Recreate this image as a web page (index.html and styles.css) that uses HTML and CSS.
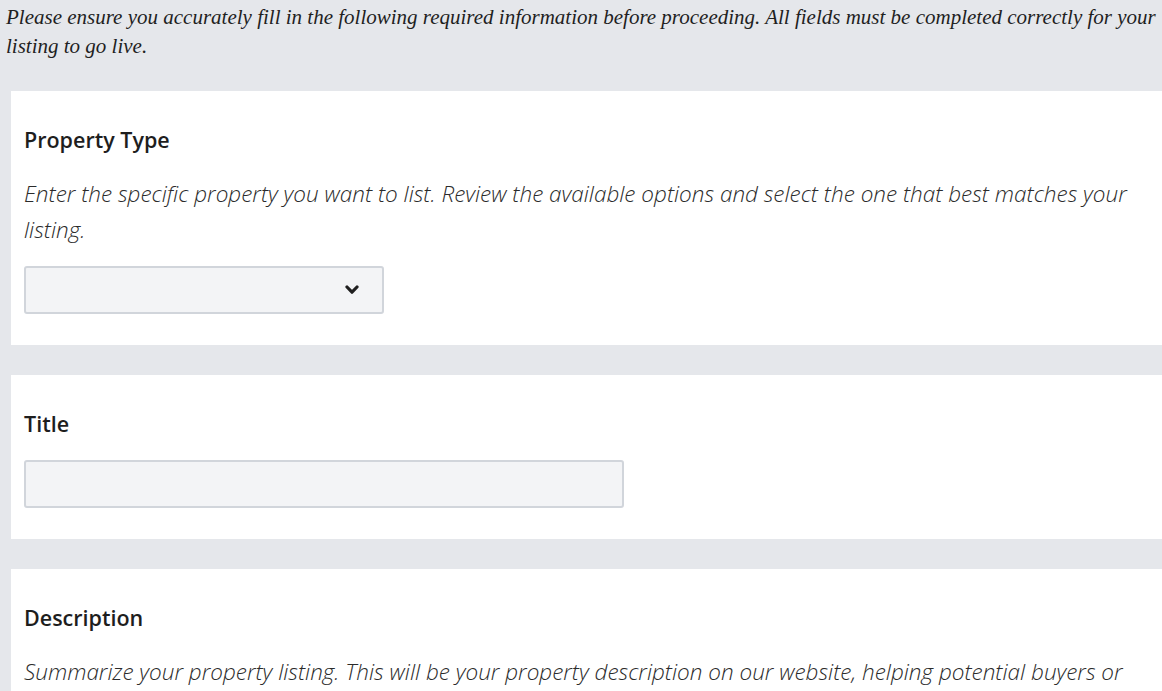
FILE: index.html
```html
<!DOCTYPE html>
<html lang="en">
<head>
<meta charset="utf-8">
<title>Listing form</title>
<link rel="stylesheet" href="styles.css">
</head>
<body>
<div class="page">
  <p class="intro">Please ensure you accurately fill in the following required information before proceeding. All fields must be completed correctly for your listing to go live.</p>
  <div class="cards">
    <section class="card">
      <h2 class="label">Property Type</h2>
      <p class="help">Enter the specific property you want to list. Review the available options and select the one that best matches your listing.</p>
      <div class="select">
        <svg class="chev" viewBox="0 0 14 10" width="14" height="10" aria-hidden="true"><polyline points="2,2 7,7.2 12,2" fill="none" stroke="#1f1f1f" stroke-width="3.2" stroke-linecap="round" stroke-linejoin="round"/></svg>
      </div>
    </section>
    <section class="card">
      <h2 class="label">Title</h2>
      <div class="input"></div>
    </section>
    <section class="card">
      <h2 class="label">Description</h2>
      <p class="help">Summarize your property listing. This will be your property description on our website, helping potential buyers or renters understand the key features and benefits of your property.</p>
    </section>
  </div>
</div>
</body>
</html>
```
FILE: styles.css
```css
html, body {
  margin: 0;
  padding: 0;
  background: #e5e7eb;
}
.page {
  padding: 3px 0 40px 6px;
  overflow: hidden;
}
.intro {
  margin: 0 0 30px;
  font-family: "Liberation Serif", serif;
  font-style: italic;
  font-size: 21px;
  line-height: 29px;
  color: #1f1f1f;
}
.cards {
  margin-left: 5px;
  display: flex;
  flex-direction: column;
  gap: 30px;
}
.card {
  background: #fff;
  padding: 31px 13px 31px;
  display: flex;
  flex-direction: column;
}
.label {
  margin: 0 0 18px;
  font-family: "Open Sans", "Noto Sans", sans-serif;
  font-weight: 600;
  font-size: 21.5px;
  line-height: 36px;
  color: #1e1e1e;
}
.help {
  margin: 0 0 18px;
  font-family: "Open Sans", "Noto Sans", sans-serif;
  font-weight: 300;
  font-style: italic;
  font-size: 22.5px;
  line-height: 36px;
  color: #2b2b2b;
}
.card .help:last-child { margin-bottom: 0; }
.select, .input {
  box-sizing: border-box;
  height: 48px;
  background: #f3f4f6;
  border: 2px solid #d1d5db;
  border-radius: 3px;
}
.select {
  width: 360px;
  display: flex;
  align-items: center;
  justify-content: flex-end;
  padding-right: 23px;
}
.chev { display: block; flex: none; }
.input { width: 600px; }
```
